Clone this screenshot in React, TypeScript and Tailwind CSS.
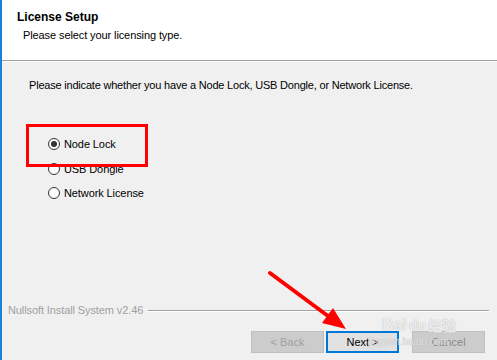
import React from "react";

const font = { fontFamily: '"Liberation Sans", Arial, sans-serif' };

const Radio = ({ label, checked }: { label: string; checked?: boolean }) => (
  <div className="flex h-[24px] items-center gap-[4px]">
    <span className="flex h-[12px] w-[12px] items-center justify-center rounded-full border border-[#333] bg-white">
      {checked && <span className="h-[6px] w-[6px] rounded-full bg-[#333]" />}
    </span>
    <span className="text-[11px] leading-[15px] tracking-[-0.1px] text-black">{label}</span>
  </div>
);

export default function App() {
  return (
    <div style={font} className="relative flex h-[360px] w-[497px] flex-col overflow-hidden border-l-2 border-[#1a82d8] bg-[#f0f0f0]">
      {/* Header */}
      <header className="h-[60px] bg-white pl-[15px] pt-[10px]">
        <h1 className="text-[12px] font-bold leading-[15px] text-black">License Setup</h1>
        <p className="mt-[3px] pl-[6px] text-[11px] leading-[15px] tracking-[-0.1px] text-black">Please select your licensing type.</p>
      </header>
      <div className="h-[2px] border-t border-b border-t-[#a0a0a0] border-b-white" />

      {/* Body */}
      <main className="flex flex-1 flex-col">
        <p className="pl-[27px] pt-[16px] text-[11px] leading-[15px] tracking-[-0.2px] text-black">
          Please indicate whether you have a Node Lock, USB Dongle, or Network License.
        </p>
        <div className="mt-[39px] flex flex-col pl-[46px]">
          <Radio label="Node Lock" checked />
          <div className="h-[1px]" />
          <Radio label="USB Dongle" />
          <Radio label="Network License" />
        </div>

        <div className="mt-auto flex items-center gap-[5px] pl-[6px] pr-[8px]">
          <span className="text-[11px] leading-[15px] tracking-[-0.1px] text-[#a0a0a0]">Nullsoft Install System v2.46</span>
          <div className="h-[2px] flex-1 border-t border-b border-t-[#a0a0a0] border-b-white" />
        </div>
        <div className="mb-[7px] mt-[13px] flex justify-end gap-[2px] pr-[12px]">
          <button className="h-[22px] w-[73px] border border-[#bfbfbf] bg-[#cccccc] text-[11px] text-[#a0a0a0]">&lt; Back</button>
          <button className="mr-[11px] h-[22px] w-[73px] border-2 border-[#0078d7] bg-[#e1e1e1] text-[11px] text-black">Next &gt;</button>
          <button className="h-[22px] w-[73px] border border-[#bfbfbf] bg-[#cccccc] text-[11px] text-[#8a8a8a]">Cancel</button>
        </div>
      </main>

      {/* Annotation: red box */}
      <div className="absolute left-[24px] top-[124px] h-[43px] w-[122px] border-[3px] border-[#ff0000]" />

      {/* Watermark */}
      <div className="pointer-events-none absolute left-[380px] top-[317px] flex items-center gap-[2px] text-white/80 [text-shadow:0_0_1px_#9a9a9a]">
        <span className="text-[16px] font-bold leading-[16px]">Bai</span>
        <span className="text-[14px] font-bold leading-[16px]">du</span>
        <span className="text-[14px] font-bold leading-[16px]" style={{ fontFamily: '"Noto Sans CJK SC", sans-serif' }}>经验</span>
      </div>
      <div className="pointer-events-none absolute left-[366px] top-[336px] text-[10px] leading-[12px] text-white/60 [text-shadow:0_0_1px_#a8a8a8]">
        jingyan.baidu.com
      </div>

      {/* Annotation: red arrow */}
      <svg className="pointer-events-none absolute left-0 top-0" width="497" height="360" viewBox="0 0 497 360">
        <line x1="268" y1="273" x2="330" y2="319" stroke="#ff0000" strokeWidth="4" strokeLinecap="round" />
        <polygon points="344,329 320,323 331,308" fill="#ff0000" />
      </svg>
    </div>
  );
}
